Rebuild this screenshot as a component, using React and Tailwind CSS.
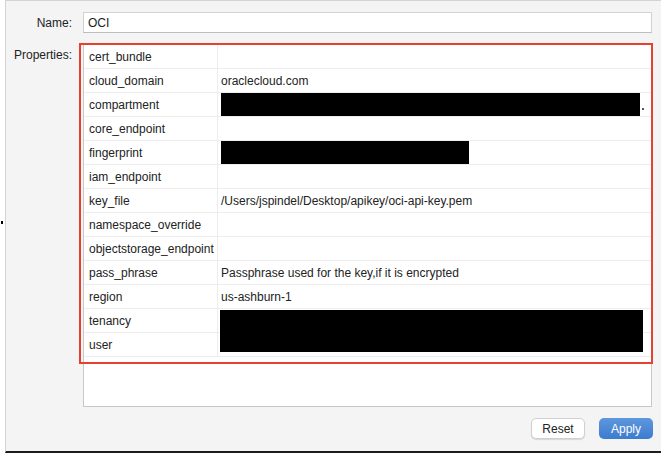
import React from 'react';

// property rows of the OCI profile
const rows = [
  { key: 'cert_bundle', value: '' },
  { key: 'cloud_domain', value: 'oraclecloud.com' },
  { key: 'compartment', value: '', redact: 'w-[419px]' },
  { key: 'core_endpoint', value: '' },
  { key: 'fingerprint', value: '', redact: 'w-[248px]' },
  { key: 'iam_endpoint', value: '' },
  { key: 'key_file', value: '/Users/jspindel/Desktop/apikey/oci-api-key.pem' },
  { key: 'namespace_override', value: '' },
  { key: 'objectstorage_endpoint', value: '' },
  { key: 'pass_phrase', value: 'Passphrase used for the key,if it is encrypted' },
  { key: 'region', value: 'us-ashburn-1' },
  { key: 'tenancy', value: '' },
  { key: 'user', value: '' },
];

const PropertyRow = ({ name, value, redact }) => (
  <div className="flex h-[24px] border-b border-[#ededed]">
    <div className="w-[134px] shrink-0 border-r border-[#ededed] pl-[5px] flex items-center">
      {name}
    </div>
    <div className="flex-1 pl-[3px] flex items-center">
      {redact ? <div className={`${redact} h-[23px] bg-black`} /> : value}
    </div>
  </div>
);

export default function App() {
  return (
    <div
      className="w-[668px] h-[458px] bg-white text-[12px] text-[#222]"
      style={{ fontFamily: '"Liberation Sans", Arial, sans-serif' }}
    >
      <div className="relative ml-[5px] w-[656px] h-[453px] bg-[#f4f4f4] border-l border-t border-[#d4d4d4] border-b-2 border-b-[#1c1c1c] flex flex-col">
        {/* stray black tick on the left edge */}
        <div className="absolute left-[-5px] top-[220px] w-[2px] h-[3px] bg-black" />

        {/* Name */}
        <div className="flex items-center mt-[11px]">
          <div className="w-[67px] text-right pr-[1px] pt-[1px]">Name:</div>
          <div className="ml-[10px] w-[569px] h-[21px] bg-white border border-[#d2d2d2] border-b-[#bdbdbd] flex items-center pl-[4px] pt-[1px]">
            OCI
          </div>
        </div>

        {/* Properties */}
        <div className="flex mt-[10px]">
          <div className="w-[67px] text-right pr-[1px] pt-[3px]">Properties:</div>
          <div className="relative ml-[10px] w-[569px] h-[364px] bg-white border border-[#c8c8c8] pt-[1px]">
            {rows.map((r) => (
              <PropertyRow key={r.key} name={r.key} value={r.value} redact={r.redact} />
            ))}
            {/* redaction over tenancy/user */}
            <div className="absolute left-[136px] top-[266px] w-[423px] h-[42px] bg-black" />
            <div className="absolute left-[558px] top-[64px] w-[2px] h-[2px] bg-[#555]" />
            {/* red annotation box */}
            <div className="absolute left-[-5px] top-[-1px] w-[574px] h-[321px] border-2 border-[#e8402f]" />
          </div>
        </div>

        {/* Buttons */}
        <div className="flex justify-end gap-[14px] mt-[11px] mr-[8px]">
          <button className="w-[54px] h-[21px] rounded-[5px] bg-white border border-[#d0d0d0] shadow-[0_1px_1px_rgba(0,0,0,0.12)] text-[12px] text-[#222]">
            Reset
          </button>
          <button className="w-[54px] h-[21px] rounded-[5px] bg-gradient-to-b from-[#5d97dc] to-[#3d7bcf] text-white text-[12px]">
            Apply
          </button>
        </div>
      </div>
    </div>
  );
}
